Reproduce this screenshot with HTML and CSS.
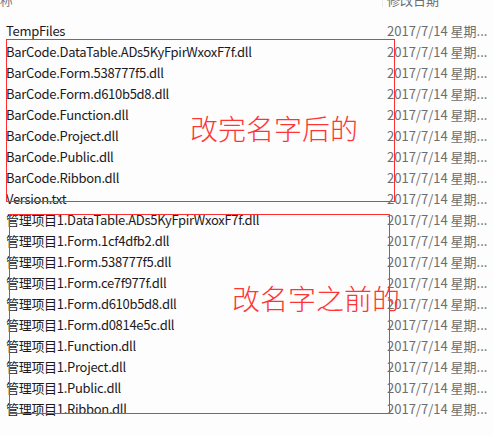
FILE: index.html
```html
<!DOCTYPE html>
<html lang="zh-CN">
<head>
<meta charset="utf-8">
<title>文件列表</title>
<link rel="stylesheet" href="styles.css">
</head>
<body>
<div class="explorer">
  <div class="header">
    <div class="col-name"><span class="hname">名称</span></div>
    <div class="col-date hdate">修改日期</div>
  </div>
  <div class="list">
    <div class="row"><div class="col-name">TempFiles</div><div class="col-date">2017/7/14 星期...</div></div>
    <div class="row"><div class="col-name">BarCode.DataTable.ADs5KyFpirWxoxF7f.dll</div><div class="col-date">2017/7/14 星期...</div></div>
    <div class="row"><div class="col-name">BarCode.Form.538777f5.dll</div><div class="col-date">2017/7/14 星期...</div></div>
    <div class="row"><div class="col-name">BarCode.Form.d610b5d8.dll</div><div class="col-date">2017/7/14 星期...</div></div>
    <div class="row"><div class="col-name">BarCode.Function.dll</div><div class="col-date">2017/7/14 星期...</div></div>
    <div class="row"><div class="col-name">BarCode.Project.dll</div><div class="col-date">2017/7/14 星期...</div></div>
    <div class="row"><div class="col-name">BarCode.Public.dll</div><div class="col-date">2017/7/14 星期...</div></div>
    <div class="row"><div class="col-name">BarCode.Ribbon.dll</div><div class="col-date">2017/7/14 星期...</div></div>
    <div class="row"><div class="col-name">Version.txt</div><div class="col-date">2017/7/14 星期...</div></div>
    <div class="row"><div class="col-name">管理项目1.DataTable.ADs5KyFpirWxoxF7f.dll</div><div class="col-date">2017/7/14 星期...</div></div>
    <div class="row"><div class="col-name">管理项目1.Form.1cf4dfb2.dll</div><div class="col-date">2017/7/14 星期...</div></div>
    <div class="row"><div class="col-name">管理项目1.Form.538777f5.dll</div><div class="col-date">2017/7/14 星期...</div></div>
    <div class="row"><div class="col-name">管理项目1.Form.ce7f977f.dll</div><div class="col-date">2017/7/14 星期...</div></div>
    <div class="row"><div class="col-name">管理项目1.Form.d610b5d8.dll</div><div class="col-date">2017/7/14 星期...</div></div>
    <div class="row"><div class="col-name">管理项目1.Form.d0814e5c.dll</div><div class="col-date">2017/7/14 星期...</div></div>
    <div class="row"><div class="col-name">管理项目1.Function.dll</div><div class="col-date">2017/7/14 星期...</div></div>
    <div class="row"><div class="col-name">管理项目1.Project.dll</div><div class="col-date">2017/7/14 星期...</div></div>
    <div class="row"><div class="col-name">管理项目1.Public.dll</div><div class="col-date">2017/7/14 星期...</div></div>
    <div class="row"><div class="col-name">管理项目1.Ribbon.dll</div><div class="col-date">2017/7/14 星期...</div></div>
  </div>

  <div class="mark mark-after"></div>
  <div class="note note-after">改完名字后的</div>
  <div class="mark mark-before"></div>
  <div class="note note-before">改名字之前的</div>
</div>
</body>
</html>
```

FILE: styles.css
```css
html, body {
  margin: 0;
  padding: 0;
  background: #fdfdfd;
}

.explorer {
  position: relative;
  width: 493px;
  height: 436px;
  overflow: hidden;
  font-family: "Noto Sans CJK SC", "Noto Sans", sans-serif;
  font-size: 13px;
  color: #1c1a1e;
}

.header {
  display: flex;
  height: 7px;
  overflow: hidden;
  align-items: flex-end;
  color: #7a7d84;
  font-size: 13px;
}

.header .col-name,
.header .col-date {
  line-height: 14px;
  height: 14px;
  flex-shrink: 0;
}

.hname {
  margin-left: -19px;
}

.header .hdate {
  border-left: 1px solid #ececec;
  padding-left: 4px;
  margin-left: -5px;
}

.list {
  display: flex;
  flex-direction: column;
  margin-top: 13px;
}

.row {
  display: flex;
  height: 21px;
  align-items: center;
}

.col-name {
  width: 387px;
  padding-left: 6px;
  box-sizing: border-box;
  white-space: nowrap;
  flex-shrink: 0;
  letter-spacing: -0.3px;
}

.col-date {
  color: #6d6d6d;
  white-space: nowrap;
}

.mark {
  position: absolute;
  border: 1px solid #ff2f2f;
  box-sizing: border-box;
}

.mark-after {
  left: 6px;
  top: 39px;
  width: 389px;
  height: 163px;
}

.mark-before {
  left: 9px;
  top: 214px;
  width: 381px;
  height: 200px;
}

.note {
  position: absolute;
  color: #ff3535;
  font-size: 28px;
  line-height: 28px;
  font-family: "Noto Sans CJK SC", sans-serif;
  font-weight: 300;
  white-space: nowrap;
}

.note-after {
  left: 190px;
  top: 114px;
}

.note-before {
  left: 232px;
  top: 284px;
}
```
